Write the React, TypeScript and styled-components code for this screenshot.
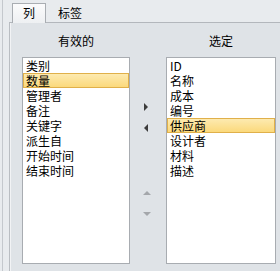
import styled, { createGlobalStyle } from 'styled-components'

const available = ['类别', '数量', '管理者', '备注', '关键字', '派生自', '开始时间', '结束时间']
const chosen = ['ID', '名称', '成本', '编号', '供应商', '设计者', '材料', '描述']

function Arrow({ dir, dim }: { dir: 'left' | 'right' | 'up' | 'down'; dim?: boolean }) {
  const points = {
    right: '2,1 6,5 2,9',
    left: '6,1 2,5 6,9',
    up: '1,7 5,3 9,7',
    down: '1,3 5,7 9,3',
  }[dir]

  return (
    <ArrowButton>
      <svg width="10" height="10" viewBox="0 0 10 10">
        <polygon points={points} fill={dim ? '#a4a7ab' : '#3c3c3c'} />
      </svg>
    </ArrowButton>
  )
}

export default function App() {
  return (
    <>
      <GlobalStyle />
      <Window>
        <Frame>
          <TabStrip>
            <Tab $active>列</Tab>
            <Tab>标签</Tab>
          </TabStrip>
          <Panel>
            <Columns>
              <Heading>有效的</Heading>
              <span />
              <Heading>选定</Heading>

              <List>
                {available.map((name) => (
                  <Item key={name} $selected={name === '数量'}>
                    {name}
                  </Item>
                ))}
              </List>
              <Mover>
                <Arrow dir="right" />
                <Arrow dir="left" />
                <Spacer />
                <Arrow dir="up" dim />
                <Arrow dir="down" dim />
              </Mover>
              <List>
                {chosen.map((name) => (
                  <Item key={name} $selected={name === '供应商'}>
                    {name}
                  </Item>
                ))}
              </List>
            </Columns>
          </Panel>
        </Frame>
      </Window>
    </>
  )
}

const GlobalStyle = createGlobalStyle`
  body {
    margin: 0;
    background: #e8ebee;
    font-family: 'Noto Sans CJK SC', 'DejaVu Sans', sans-serif;
    font-size: 12px;
    color: #000;
  }
`

const Window = styled.div`
  width: 280px;
  height: 271px;
  box-sizing: border-box;
  padding-left: 2px;
  background: #e8ebee;
`

const Frame = styled.div`
  height: 100%;
  display: flex;
  flex-direction: column;
  border-left: 1px solid #c4c8cd;
  padding-left: 6px;
`

const TabStrip = styled.div`
  height: 22px;
  display: flex;
  align-items: flex-end;
  padding-left: 3px;
  position: relative;
  z-index: 1;
`

const Tab = styled.div<{ $active?: boolean }>`
  height: ${(p) => (p.$active ? 19 : 18)}px;
  line-height: 18px;
  padding: 0 ${(p) => (p.$active ? 10 : 11)}px;
  margin-bottom: ${(p) => (p.$active ? -1 : 0)}px;
  border: 1px solid ${(p) => (p.$active ? '#a9adb2' : 'transparent')};
  border-bottom: none;
  background: ${(p) => (p.$active ? 'linear-gradient(#fbfbfc, #eef0f2)' : 'transparent')};
`

const Panel = styled.div`
  flex: 1;
  border-top: 1px solid #b3b7bc;
  border-left: 1px solid #b9bdc2;
  box-shadow: inset 1px 0 #f2f3f5;
  background: #dfe3e7;
  padding-left: 12px;
`

const Columns = styled.div`
  display: grid;
  grid-template-columns: 108px 36px 110px;
  grid-template-rows: 34px 207px;
`

const Heading = styled.div`
  display: flex;
  align-items: flex-end;
  justify-content: center;
  padding-bottom: 7px;
  line-height: 18px;
`

const List = styled.div`
  background: #fff;
  border: 1px solid #a8acb1;
`

const Item = styled.div<{ $selected?: boolean }>`
  height: 15px;
  box-sizing: border-box;
  padding-left: ${(p) => (p.$selected ? 2 : 3)}px;
  border: ${(p) => (p.$selected ? '1px solid #e0b04a' : 'none')};
  background: ${(p) => (p.$selected ? 'linear-gradient(#fdeab0, #fbd97c)' : 'transparent')};
  line-height: ${(p) => (p.$selected ? 13 : 15)}px;
  white-space: nowrap;
`

const Mover = styled.div`
  display: flex;
  flex-direction: column;
  align-items: center;
  padding-top: 45px;
  gap: 11px;
`

const Spacer = styled.div`
  height: 33px;
`

const ArrowButton = styled.div`
  width: 10px;
  height: 10px;
  display: flex;
  margin-left: -2px;
`
